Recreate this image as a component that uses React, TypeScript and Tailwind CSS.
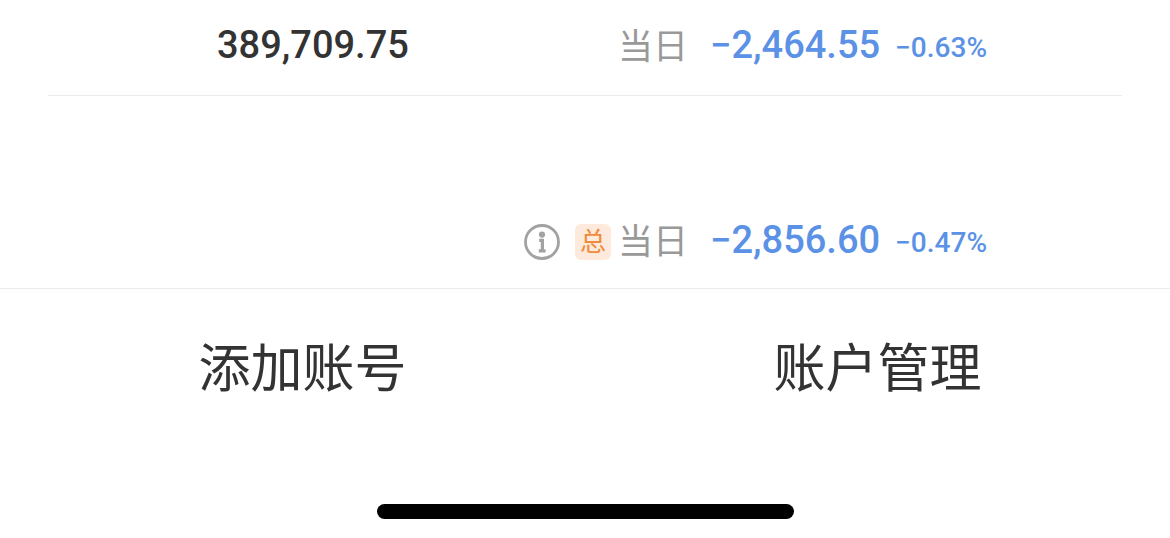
interface Change {
  amount: string;
  percent: string;
}

function InfoIcon() {
  return (
    <svg viewBox="0 0 36 36" className="h-9 w-9" fill="none" aria-hidden="true">
      <circle cx="18" cy="18" r="16.5" stroke="#a2a2a2" strokeWidth="2.8" />
      <circle cx="18" cy="10.6" r="3.1" fill="#a2a2a2" />
      <path d="M15.2 16.4h3.2v10.4M14.8 26.8h6.8" stroke="#a2a2a2" strokeWidth="3.2" />
    </svg>
  );
}

function DayChange({ amount, percent }: Change) {
  return (
    <div className="flex items-end">
      <span className="text-[35px] leading-[48px] text-[#999999]">当日</span>
      <span className="ml-[22px] text-[38px] leading-[54px] font-medium">{amount}</span>
      <span className="ml-[15px] text-[28px] leading-[48px] font-medium">{percent}</span>
    </div>
  );
}

export default function App() {
  return (
    <main className="bg-white font-['Roboto','Noto_Sans_CJK_SC',sans-serif] text-[#333333]">
      <section className="mx-12 flex items-center border-b border-[#ebebeb] pt-[18px] pr-[135px] pb-[23px] pl-[169px] text-[#5b92e5]">
        <span className="text-[38px] leading-[54px] font-medium text-[#333333]">389,709.75</span>
        <div className="ml-auto">
          <DayChange amount="−2,464.55" percent="−0.63%" />
        </div>
      </section>

      <section className="flex items-end justify-end border-b border-[#ebebeb] pt-[117px] pr-[183px] pb-[21px] text-[#5b92e5]">
        <button type="button" aria-label="info" className="mr-[15px] mb-[7px]">
          <InfoIcon />
        </button>
        <span className="mr-[7px] mb-[7px] flex h-9 w-9 items-center justify-center rounded-md bg-[#fdeadc] text-[26px] leading-9 text-[#f08a3c]">
          总
        </span>
        <DayChange amount="−2,856.60" percent="−0.47%" />
      </section>

      <nav className="grid grid-cols-2 pt-[43px] text-[52px] leading-[76px]">
        <button type="button" className="pl-5">添加账号</button>
        <button type="button">账户管理</button>
      </nav>

      <div className="mx-auto mt-24 h-[15px] w-[417px] rounded-full bg-black" />
    </main>
  );
}
